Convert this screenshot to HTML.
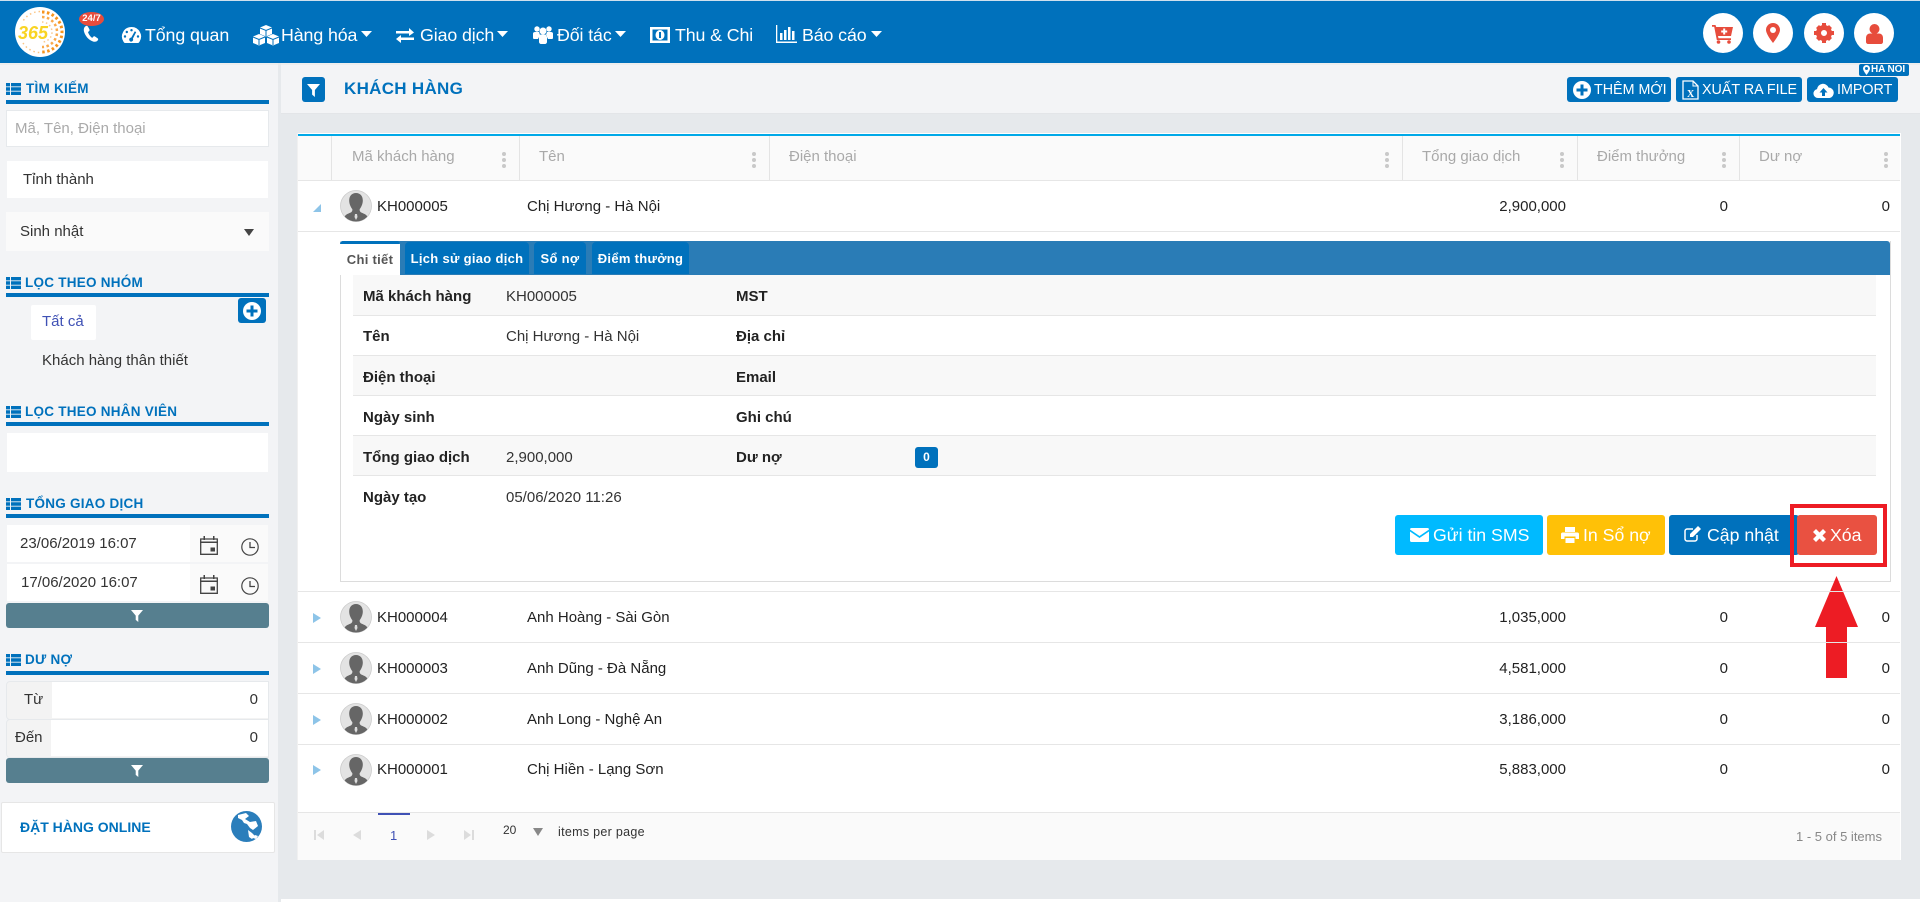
<!DOCTYPE html>
<html lang="vi"><head><meta charset="utf-8"><title>Khách hàng</title>
<style>
html,body{margin:0;padding:0;width:1920px;height:902px;overflow:hidden;background:#e6e9ec;font-family:"Liberation Sans",sans-serif;font-size:15px;color:#333}
.a{position:absolute}
.t{position:absolute;white-space:nowrap;line-height:22px;font-size:15px}
.n{position:absolute;white-space:nowrap;line-height:24px;font-size:17.8px;color:#fff;top:23px;letter-spacing:-.1px}
.h{position:absolute;white-space:nowrap;line-height:20px;font-size:13.5px;font-weight:bold;color:#0071bc;left:26px;letter-spacing:.25px}
.bar{position:absolute;left:6px;width:263px;height:4px;background:#0071bc}
.li{position:absolute;left:6px;width:15px;height:12px}
.c{position:absolute;white-space:nowrap;line-height:22px;color:#a9a9a9;font-size:15px;top:146px}
.sep{position:absolute;top:136px;height:44px;width:1px;background:#e4e4e4}
.bd{position:absolute;height:1px;background:#e6e6e6}
.d{position:absolute;width:4px;height:16px;top:152px}
.r{position:absolute;text-align:right;white-space:nowrap;line-height:22px;font-size:15px;color:#222}
.l{position:absolute;white-space:nowrap;line-height:22px;font-weight:bold;font-size:15px;color:#222;left:363px}
.l2{left:736px}
.v{position:absolute;white-space:nowrap;line-height:22px;font-size:15px;left:506px;color:#333}
.tab{position:absolute;top:242px;height:32px;line-height:33px;background:#0071bc;color:#fff;font-weight:bold;font-size:13px;text-align:center;border-radius:4px 4px 0 0;letter-spacing:.3px}
.btn{position:absolute;top:515px;height:40px;line-height:40px;border-radius:3px;color:#fff;font-size:17.7px;white-space:nowrap}
.tb{position:absolute;top:77px;height:25px;line-height:27px;background:#0071bc;color:#fff;border-radius:3px;font-size:14.3px;white-space:nowrap}
.fb{position:absolute;left:6px;width:263px;height:25px;background:#567f8f;border-radius:3px}
.w{position:absolute;background:#fff}
svg{position:absolute;overflow:visible}
</style></head><body>
<svg width="0" height="0" style="position:absolute"><defs>
<symbol id="list" viewBox="0 0 15 12"><path fill="#0071bc" d="M0 0h4v3.400H0zM5 0h10v3.400H5zM0 4.300h4v3.400H0zM5 4.300h10v3.400H5zM0 8.600h4V12H0zM5 8.600h10V12H5z"/></symbol>
<symbol id="fil" viewBox="0 0 14 14"><path fill="#fff" d="M0 0h14L8.500 6.500V14L5.500 11.500V6.500z"/></symbol>
<symbol id="ava" viewBox="0 0 32 32"><defs><clipPath id="cc"><circle cx="16" cy="16" r="15.500"/></clipPath></defs><circle cx="16" cy="16" r="15.500" fill="#e3e3e3" stroke="#ccc" stroke-width=".8"/><g clip-path="url(#cc)" fill="#666"><path d="M16 3c4.500 0 7 3.500 6.800 8-.1 3-1.500 6-3 8-.5 1 0 2.500 1 3.200 2.500 1.300 5.500 2 6.500 4.300V32H4.700v-5.500c1-2.300 4-3 6.500-4.300 1-.7 1.500-2.200 1-3.200-1.500-2-2.900-5-3-8C9 6.500 11.500 3 16 3z"/><path fill="#ddd" d="M15 24h2l.5 3-1.500 3-1.500-3z"/></g></symbol>
<symbol id="cal" viewBox="0 0 18 19"><path fill="none" stroke="#444" stroke-width="1.300" d="M.7 3h16.600v15.300H.7z"/><path fill="#444" d="M0 5.500h18V7H0zM3.500 0h1.500v4H3.500zM13 0h1.500v4H13zM10.500 11.500h4.500v4h-4.500z"/></symbol>
<symbol id="clk" viewBox="0 0 18 18"><circle cx="9" cy="9" r="8.200" fill="none" stroke="#444" stroke-width="1.200"/><path fill="none" stroke="#444" stroke-width="1.300" d="M9 4v5.500h5"/></symbol>
<symbol id="plus" viewBox="0 0 18 18"><circle cx="9" cy="9" r="9" fill="#fff"/><path fill="#0071bc" d="M7.500 3.500h3v4h4v3h-4v4h-3v-4h-4v-3h4z"/></symbol>
<symbol id="tri" viewBox="0 0 8 10"><path fill="#8dc4e8" d="M0 0l8 5-8 5z"/></symbol>
<symbol id="car" viewBox="0 0 11 6"><path fill="#fff" d="M0 0h11L5.500 6z"/></symbol>
</defs></svg>

<!-- header -->
<div class="a" style="left:0;top:0;width:1920px;height:1px;background:#cfe0ee"></div>
<div class="a" style="left:0;top:1px;width:1920px;height:62px;background:#0071bc"></div>
<svg style="left:15px;top:7px" width="50" height="50" viewBox="0 0 50 50"><circle cx="25" cy="25" r="25" fill="#fff"/><g fill="none" stroke="#f7941d"><path d="M27 5A20 20 0 0 1 27 45" stroke-width="3" stroke-dasharray="2.500 2.500"/><path d="M27 10A15 15 0 0 1 27 40" stroke-width="2.500" stroke-dasharray="2.500 2.500" stroke-opacity=".8"/><path d="M27 15A10 10 0 0 1 27 35" stroke-width="1.500" stroke-dasharray="1.500 2.500" stroke-opacity=".5"/><path d="M25 4.500A20.500 20.500 0 0 0 8 14M8 36A20.500 20.500 0 0 0 25 45.500" stroke-width="1.500" stroke-dasharray="1.500 3" stroke-opacity=".55"/></g><text x="3" y="32" font-family="Liberation Sans" font-weight="bold" font-style="italic" font-size="18" fill="#f9d423">365</text></svg>
<svg style="left:83px;top:26px" width="16" height="16" viewBox="0 0 16 16"><path fill="#fff" d="M3 0C1 1 .5 3 1 5.500c1 4 4.500 8.500 9 10 2 .6 4 .2 5-1.500.5-.8 0-1.500-.8-2L12 10.500c-.8-.5-1.500-.2-2 .5l-.7.9C7.500 11 5.500 8 5 6l1-.8c.6-.5.700-1.200.4-2L5 .7C4.600 0 3.800-.3 3 0z"/></svg>
<div class="a" style="left:79px;top:12px;width:25px;height:14px;border-radius:50%;background:#e74c3c;color:#fff;font-size:9.500px;font-weight:bold;text-align:center;line-height:14px">24/7</div>

<svg style="left:122px;top:27px" width="19" height="17" viewBox="0 0 19 17"><path fill="#fff" d="M9.500 0a9.500 9.500 0 0 1 8 14.700c-.5.800-1 1.300-2 1.300h-12c-1 0-1.500-.5-2-1.300A9.500 9.500 0 0 1 9.500 0z"/><g fill="#0071bc"><circle cx="9.500" cy="3.200" r="1.200"/><circle cx="4.800" cy="5" r="1.200"/><circle cx="3" cy="9.500" r="1.200"/><circle cx="16" cy="9.500" r="1.200"/><path d="M12.800 4.300l1.400.8-3.300 6.500a2 2 0 1 1-1.700-1z"/></g></svg>
<div class="n" style="left:145px">Tổng quan</div>
<svg style="left:252px;top:25px" width="28" height="20" viewBox="0 0 28 20"><g fill="#fff"><path d="M14 0l6 2.500v6.500l-6 2.500-6-2.500V2.500z"/><path d="M7 9l6 2.500V18l-6 2.500L1 18v-6.500z"/><path d="M21 9l6 2.500V18l-6 2.500L15 18v-6.500z"/></g><path stroke="#0071bc" stroke-width="1" fill="none" d="M8 3l6 2.500L20 3M14 5.500V11M1 12l6 2.500L13 12M7 14.500V20M15 12l6 2.500L27 12M21 14.500V20"/></svg>
<div class="n" style="left:281px">Hàng hóa</div>
<svg style="left:361px;top:31px" width="11" height="6"><use href="#car"/></svg>
<svg style="left:396px;top:28px" width="18" height="15" viewBox="0 0 18 15"><path fill="#fff" d="M0 3h13V0l5 4.500L13 8V5.500H0zM18 9.500H5V7L0 11l5 4v-3h13z"/></svg>
<div class="n" style="left:420px">Giao dịch</div>
<svg style="left:497px;top:31px" width="11" height="6"><use href="#car"/></svg>
<svg style="left:533px;top:25px" width="20" height="19" viewBox="0 0 20 19"><g fill="#fff"><circle cx="4" cy="4" r="2.700"/><circle cx="16" cy="4" r="2.700"/><circle cx="10" cy="6" r="3.500"/><path d="M0 8.500c0-1 1-1.500 2-1.500h4l1 3-2 4H1c-1 0-1-1-1-2zM20 8.500c0-1-1-1.500-2-1.500h-4l-1 3 2 4h4c1 0 1-1 1-2zM6 12c0-1.500 1-2.500 2-2.500h4c1 0 2 1 2 2.500v5c0 1-1 2-2 2H8c-1 0-2-1-2-2z"/></g></svg>
<div class="n" style="left:557px">Đối tác</div>
<svg style="left:615px;top:31px" width="11" height="6"><use href="#car"/></svg>
<svg style="left:650px;top:27px" width="20" height="16" viewBox="0 0 20 16"><path fill="#fff" d="M0 0h20v16H0z"/><path fill="#0071bc" d="M2.500 2.500h15v11h-15z"/><ellipse cx="10" cy="8" rx="4.500" ry="5" fill="#fff"/><path fill="#0071bc" d="M9 5h2v6H9z"/></svg>
<div class="n" style="left:675px">Thu &amp; Chi</div>
<svg style="left:776px;top:25px" width="21" height="18" viewBox="0 0 21 18"><path fill="#fff" d="M0 0h1.300v16.500H21V18H0zM4 8h2.500v7H4zM8 5h2.500v10H8zM12 2h2.500v13H12zM16 6h2.500v9H16z"/></svg>
<div class="n" style="left:802px">Báo cáo</div>
<svg style="left:871px;top:31px" width="11" height="6"><use href="#car"/></svg>

<div class="a" style="left:1703px;top:13px;width:40px;height:40px;border-radius:50%;background:#fff"></div>
<svg style="left:1712px;top:25px" width="21" height="19" viewBox="0 0 21 19"><path fill="#e74c3c" d="M0 0h3.500l.7 2H21l-2 9H6l.5 2.200H19v1.800H4.800L2.200 1.800H0z"/><circle cx="6.500" cy="17" r="1.800" fill="#e74c3c"/><circle cx="17" cy="17" r="1.800" fill="#e74c3c"/><path fill="#fff" d="M11.200 3.500h2v2h2v2h-2v2h-2v-2h-2v-2h2z"/></svg>
<div class="a" style="left:1753px;top:13px;width:40px;height:40px;border-radius:50%;background:#fff"></div>
<svg style="left:1766px;top:23px" width="14" height="20" viewBox="0 0 14 20"><path fill="#e74c3c" d="M7 0a7 7 0 0 1 7 7c0 3-3.500 8.500-7 13C3.500 15.500 0 10 0 7a7 7 0 0 1 7-7z"/><circle cx="7" cy="7" r="3" fill="#fff"/></svg>
<div class="a" style="left:1804px;top:13px;width:40px;height:40px;border-radius:50%;background:#fff"></div>
<svg style="left:1814px;top:23px" width="20" height="20" viewBox="0 0 20 20"><circle cx="10" cy="10" r="5.500" fill="none" stroke="#e74c3c" stroke-width="5"/><g fill="#e74c3c"><path d="M8 0h4v4H8zM8 16h4v4H8zM0 8h4v4H0zM16 8h4v4h-4zM2 5l3-3 2.500 2.500-3 3zM15 2l3 3-2.500 2.500-3-3zM18 15l-3 3-2.500-2.500 3-3zM5 18l-3-3 2.500-2.500 3 3z"/></g></svg>
<div class="a" style="left:1854px;top:13px;width:40px;height:40px;border-radius:50%;background:#fff"></div>
<svg style="left:1866px;top:24px" width="17" height="20" viewBox="0 0 17 20"><circle cx="8.500" cy="5" r="5" fill="#e74c3c"/><path fill="#e74c3c" d="M0 14c0-3 2-4.500 4-4.500h9c2 0 4 1.500 4 4.500v4c0 1-1 2-2 2H2c-1 0-2-1-2-2z"/></svg>

<!-- sidebar background -->
<div class="a" style="left:0;top:63px;width:278px;height:839px;background:#f3f4f6"></div>
<div class="a" style="left:281px;top:63px;width:1639px;height:50px;background:#f3f4f6;border-bottom:1px solid #e3e5e8"></div>
<div class="a" style="left:0;top:63px;width:1920px;height:2px;background:#eaeaea;opacity:.6"></div>
<div class="a" style="left:281px;top:899px;width:1639px;height:3px;background:#fff"></div>

<!-- sidebar -->
<svg class="li" style="top:83px"><use href="#list"/></svg><div class="h" style="top:79px">TÌM KIẾM</div><div class="bar" style="top:100px"></div>
<div class="w" style="left:6px;top:110px;width:261px;height:35px;border:1px solid #e6e9ec"></div>
<div class="t" style="left:15px;top:118px;color:#aaa">Mã, Tên, Điện thoại</div>
<div class="w" style="left:7px;top:161px;width:261px;height:37px"></div>
<div class="t" style="left:23px;top:169px">Tỉnh thành</div>
<div class="a" style="left:6px;top:212px;width:263px;height:39px;background:#fafafa"></div>
<div class="t" style="left:20px;top:221px">Sinh nhật</div>
<svg style="left:244px;top:229px" width="10" height="7" viewBox="0 0 10 7"><path fill="#444" d="M0 0h10L5 7z"/></svg>

<svg class="li" style="top:277px"><use href="#list"/></svg><div class="h" style="top:273px;left:25px">LỌC THEO NHÓM</div><div class="bar" style="top:293px"></div>
<div class="a" style="left:238px;top:298px;width:28px;height:25px;background:#0071bc;border-radius:3px"></div>
<svg style="left:243px;top:302px" width="18" height="18"><use href="#plus"/></svg>
<div class="w" style="left:31px;top:305px;width:65px;height:35px;border-radius:2px"></div>
<div class="t" style="left:42px;top:311px;color:#3f51b5">Tất cả</div>
<div class="t" style="left:42px;top:350px">Khách hàng thân thiết</div>

<svg class="li" style="top:406px"><use href="#list"/></svg><div class="h" style="top:402px;left:25px">LỌC THEO NHÂN VIÊN</div><div class="bar" style="top:422px"></div>
<div class="w" style="left:7px;top:433px;width:261px;height:39px"></div>

<svg class="li" style="top:498px"><use href="#list"/></svg><div class="h" style="top:494px">TỔNG GIAO DỊCH</div><div class="bar" style="top:514px"></div>
<div class="a" style="left:7px;top:525px;width:261px;height:37px;background:#fafafa"></div>
<div class="w" style="left:7px;top:525px;width:183px;height:37px"></div>
<div class="t" style="left:20px;top:533px">23/06/2019 16:07</div>
<svg style="left:200px;top:536px" width="18" height="19"><use href="#cal"/></svg>
<svg style="left:241px;top:538px" width="18" height="18"><use href="#clk"/></svg>
<div class="a" style="left:7px;top:564px;width:261px;height:37px;background:#fafafa"></div>
<div class="w" style="left:7px;top:564px;width:183px;height:37px"></div>
<div class="t" style="left:21px;top:572px">17/06/2020 16:07</div>
<svg style="left:200px;top:575px" width="18" height="19"><use href="#cal"/></svg>
<svg style="left:241px;top:577px" width="18" height="18"><use href="#clk"/></svg>
<div class="fb" style="top:603px"></div><svg style="left:131px;top:610px" width="12" height="12"><use href="#fil"/></svg>

<svg class="li" style="top:654px"><use href="#list"/></svg><div class="h" style="top:650px;left:25px">DƯ NỢ</div><div class="bar" style="top:671px"></div>
<div class="a" style="left:6px;top:681px;width:261px;height:37px;background:#f3f3f3;border:1px solid #e6e9ec;border-radius:4px 0 0 4px"></div>
<div class="w" style="left:52px;top:682px;width:216px;height:36px"></div>
<div class="t" style="left:24px;top:689px">Từ</div><div class="r" style="left:200px;width:58px;top:689px;color:#333">0</div>
<div class="a" style="left:6px;top:719px;width:261px;height:37px;background:#f3f3f3;border:1px solid #e6e9ec;border-radius:4px 0 0 4px"></div>
<div class="w" style="left:51px;top:720px;width:217px;height:36px"></div>
<div class="t" style="left:15px;top:727px">Đến</div><div class="r" style="left:200px;width:58px;top:727px;color:#333">0</div>
<div class="fb" style="top:758px"></div><svg style="left:131px;top:765px" width="12" height="12"><use href="#fil"/></svg>

<div class="w" style="left:1px;top:802px;width:272px;height:49px;border:1px solid #e6e6e6;border-radius:2px"></div>
<div class="t" style="left:20px;top:816px;font-size:14px;font-weight:bold;color:#0071bc">ĐẶT HÀNG ONLINE</div>
<svg style="left:231px;top:811px" width="31" height="31" viewBox="0 0 31 31"><circle cx="15.500" cy="15.500" r="15.500" fill="#2b7ebb"/><path fill="#fff" d="M7 4l8-2 3 3-4 3 5 3 6-1 2 5-5 4-3-2-3-4-3-1-2-3-4-2zM17 19l4 3 3 3-3 3-3-2zM24 24l3 1-2 3-3-1z"/></svg>

<!-- subheader -->
<div class="a" style="left:302px;top:77px;width:23px;height:25px;background:#0071bc;border-radius:3px"></div>
<svg style="left:307px;top:84px" width="13" height="13"><use href="#fil"/></svg>
<div class="t" style="left:344px;top:78px;font-size:17px;font-weight:bold;color:#0071bc;letter-spacing:.3px">KHÁCH HÀNG</div>

<div class="tb" style="left:1567px;width:104px"><span class="a" style="left:27px">THÊM MỚI</span></div>
<svg style="left:1573px;top:81px" width="18" height="18"><use href="#plus"/></svg>
<div class="tb" style="left:1676px;width:126px"><span class="a" style="left:26px">XUẤT RA FILE</span></div>
<svg style="left:1682px;top:80px" width="17" height="20" viewBox="0 0 17 20"><path fill="none" stroke="#fff" stroke-width="1.300" d="M1 1h10l5 5v13H1z"/><path fill="none" stroke="#fff" d="M11 1v5h5"/><text x="5" y="17" font-size="10" font-weight="bold" fill="#fff" font-family="Liberation Serif">X</text></svg>
<div class="tb" style="left:1807px;width:91px"><span class="a" style="left:30px">IMPORT</span></div>
<svg style="left:1813px;top:83px" width="21" height="15" viewBox="0 0 21 15"><path fill="#fff" d="M5 15a4.500 4.500 0 0 1-1-8.900A6 6 0 0 1 15.500 4.500 5.300 5.300 0 0 1 16.500 15z"/><path fill="#0071bc" d="M10.500 5l4 4.500H12V13H9V9.500H6.500z"/></svg>
<div class="a" style="left:1859px;top:64px;width:50px;height:12px;background:#0071bc;border-radius:2px;color:#fff;font-size:10px;font-weight:bold;line-height:12px;white-space:nowrap"><span class="a" style="left:12px;letter-spacing:-.1px">HA NOI</span></div>
<svg style="left:1863px;top:65px" width="7" height="10" viewBox="0 0 14 20"><path fill="#fff" d="M7 0a7 7 0 0 1 7 7c0 3-3.500 8.500-7 13C3.500 15.500 0 10 0 7a7 7 0 0 1 7-7z"/><circle cx="7" cy="7" r="3" fill="#0071bc"/></svg>

<!-- card -->
<div class="w" style="left:297px;top:133px;width:1603px;height:727px;border-left:1px solid #f0f0f0"></div>
<div class="a" style="left:298px;top:134px;width:1602px;height:2px;background:#00a9e8"></div>
<div class="a" style="left:298px;top:136px;width:1602px;height:44px;background:#fafafa"></div>
<div class="bd" style="left:298px;top:180px;width:1602px"></div>
<div class="sep" style="left:331px"></div><div class="sep" style="left:519px"></div><div class="sep" style="left:769px"></div><div class="sep" style="left:1402px"></div><div class="sep" style="left:1577px"></div><div class="sep" style="left:1739px"></div>
<div class="c" style="left:352px">Mã khách hàng</div>
<div class="c" style="left:539px">Tên</div>
<div class="c" style="left:789px">Điện thoại</div>
<div class="c" style="left:1422px">Tổng giao dịch</div>
<div class="c" style="left:1597px">Điểm thưởng</div>
<div class="c" style="left:1759px">Dư nợ</div>
<svg class="d" style="left:502px" viewBox="0 0 4 16"><g fill="#c9c9c9"><circle cx="2" cy="2" r="2"/><circle cx="2" cy="8" r="2"/><circle cx="2" cy="14" r="2"/></g></svg>
<svg class="d" style="left:752px" viewBox="0 0 4 16"><g fill="#c9c9c9"><circle cx="2" cy="2" r="2"/><circle cx="2" cy="8" r="2"/><circle cx="2" cy="14" r="2"/></g></svg>
<svg class="d" style="left:1385px" viewBox="0 0 4 16"><g fill="#c9c9c9"><circle cx="2" cy="2" r="2"/><circle cx="2" cy="8" r="2"/><circle cx="2" cy="14" r="2"/></g></svg>
<svg class="d" style="left:1560px" viewBox="0 0 4 16"><g fill="#c9c9c9"><circle cx="2" cy="2" r="2"/><circle cx="2" cy="8" r="2"/><circle cx="2" cy="14" r="2"/></g></svg>
<svg class="d" style="left:1722px" viewBox="0 0 4 16"><g fill="#c9c9c9"><circle cx="2" cy="2" r="2"/><circle cx="2" cy="8" r="2"/><circle cx="2" cy="14" r="2"/></g></svg>
<svg class="d" style="left:1884px" viewBox="0 0 4 16"><g fill="#c9c9c9"><circle cx="2" cy="2" r="2"/><circle cx="2" cy="8" r="2"/><circle cx="2" cy="14" r="2"/></g></svg>

<!-- row 1 -->
<svg style="left:313px;top:204px" width="8" height="8" viewBox="0 0 8 8"><path fill="#8dc4e8" d="M8 0v8H0z"/></svg>
<svg style="left:340px;top:190px" width="32" height="32"><use href="#ava"/></svg>
<div class="t" style="left:377px;top:196px;color:#222">KH000005</div>
<div class="t" style="left:527px;top:196px;color:#222">Chị Hương - Hà Nội</div>
<div class="r" style="left:1400px;width:166px;top:196px">2,900,000</div>
<div class="r" style="left:1650px;width:78px;top:196px">0</div>
<div class="r" style="left:1812px;width:78px;top:196px">0</div>
<div class="bd" style="left:298px;top:231px;width:1602px"></div>

<!-- detail -->
<div class="a" style="left:340px;top:241px;width:1549px;height:340px;border:1px solid #dcdcdc;border-top:0;box-sizing:content-box"></div>
<div class="a" style="left:340px;top:241px;width:1550px;height:34px;background:#2a7cb6;border-radius:3px 3px 0 0"></div>
<div class="a" style="left:340px;top:243px;width:60px;height:32px;background:#fff"></div>
<div class="a" style="left:340px;top:241px;width:60px;height:3px;background:#0071bc;border-radius:3px 3px 0 0"></div>
<div class="a" style="left:340px;top:243px;width:60px;height:32px;line-height:34px;text-align:center;color:#555;font-size:13px;font-weight:bold;letter-spacing:.3px">Chi tiết</div>
<div class="tab" style="left:405px;width:124px">Lịch sử giao dịch</div>
<div class="tab" style="left:534px;width:52px">Sổ nợ</div>
<div class="tab" style="left:592px;width:97px">Điểm thưởng</div>

<div class="a" style="left:353px;top:275px;width:1523px;height:40px;background:#f8f8f8"></div>
<div class="a" style="left:353px;top:356px;width:1523px;height:39px;background:#f8f8f8"></div>
<div class="a" style="left:353px;top:436px;width:1523px;height:39px;background:#f8f8f8"></div>
<div class="bd" style="left:353px;top:315px;width:1523px"></div>
<div class="bd" style="left:353px;top:355px;width:1523px"></div>
<div class="bd" style="left:353px;top:395px;width:1523px"></div>
<div class="bd" style="left:353px;top:435px;width:1523px"></div>
<div class="bd" style="left:353px;top:475px;width:1523px"></div>

<div class="l" style="top:286px">Mã khách hàng</div><div class="v" style="top:286px">KH000005</div><div class="l l2" style="top:286px">MST</div>
<div class="l" style="top:326px">Tên</div><div class="v" style="top:326px">Chị Hương - Hà Nội</div><div class="l l2" style="top:326px">Địa chỉ</div>
<div class="l" style="top:367px">Điện thoại</div><div class="l l2" style="top:367px">Email</div>
<div class="l" style="top:407px">Ngày sinh</div><div class="l l2" style="top:407px">Ghi chú</div>
<div class="l" style="top:447px">Tổng giao dịch</div><div class="v" style="top:447px">2,900,000</div><div class="l l2" style="top:447px">Dư nợ</div>
<div class="a" style="left:915px;top:447px;width:23px;height:21px;background:#0071bc;border-radius:3px;color:#fff;font-weight:bold;font-size:12px;text-align:center;line-height:21px">0</div>
<div class="l" style="top:487px">Ngày tạo</div><div class="v" style="top:487px">05/06/2020 11:26</div>

<div class="btn" style="left:1395px;width:148px;background:#00baff"><span class="a" style="left:38px">Gửi tin SMS</span></div>
<svg style="left:1410px;top:528px" width="19" height="14" viewBox="0 0 19 14"><path fill="#fff" d="M0 1.500C0 .5.700 0 1.500 0h16c.8 0 1.500.5 1.500 1.500L9.500 8zM0 3.500l9.500 6.500L19 3.500V12.500c0 1-.7 1.500-1.500 1.500h-16C.7 14 0 13.500 0 12.500z"/></svg>
<div class="btn" style="left:1547px;width:118px;background:#ffc107"><span class="a" style="left:36px">In Sổ nợ</span></div>
<svg style="left:1561px;top:527px" width="18" height="16" viewBox="0 0 18 16"><path fill="#fff" d="M4 0h10v5H4zM1.500 5.500h15c.8 0 1.500.7 1.500 1.500v5h-3.500V9.500h-11V12H0V7c0-.8.700-1.500 1.500-1.500zM4.500 11h9v5h-9z"/></svg>
<div class="btn" style="left:1669px;width:130px;background:#0071bc"><span class="a" style="left:38px">Cập nhật</span></div>
<svg style="left:1684px;top:526px" width="17" height="16" viewBox="0 0 17 16"><path fill="none" stroke="#fff" stroke-width="1.500" d="M13 9v4c0 1-1 2-2 2H3c-1 0-2-1-2-2V5c0-1 1-2 2-2h6"/><path fill="#fff" d="M14 0l3 3-8 8H6V8z"/></svg>

<div class="a" style="left:1790px;top:504px;width:89px;height:55px;border:4px solid #ed1c24;background:transparent"></div>
<div class="btn" style="left:1797px;width:80px;background:#e95141"><span class="a" style="left:33px">Xóa</span></div>
<svg style="left:1813px;top:528px" width="13" height="14" viewBox="0 0 13 14"><path fill="#fff" d="M3 1l3.500 3.500L10 1l3 3-3.500 3.500L13 11l-3 3-3.500-3.500L3 14l-3-3 3.500-3.500L0 4z"/></svg>
<svg style="left:1815px;top:576px" width="43" height="102" viewBox="0 0 43 102"><path fill="#ed1c24" d="M21.500 0L43 51H32V102H11V51H0z"/></svg>

<!-- rows -->
<div class="bd" style="left:298px;top:591px;width:1602px"></div>
<div class="bd" style="left:298px;top:642px;width:1602px"></div>
<div class="bd" style="left:298px;top:693px;width:1602px"></div>
<div class="bd" style="left:298px;top:744px;width:1602px"></div>

<svg style="left:313px;top:613px" width="8" height="10"><use href="#tri"/></svg>
<svg style="left:340px;top:601px" width="32" height="32"><use href="#ava"/></svg>
<div class="t" style="left:377px;top:607px;color:#222">KH000004</div><div class="t" style="left:527px;top:607px;color:#222">Anh Hoàng - Sài Gòn</div>
<div class="r" style="left:1400px;width:166px;top:607px">1,035,000</div><div class="r" style="left:1650px;width:78px;top:607px">0</div><div class="r" style="left:1812px;width:78px;top:607px">0</div>

<svg style="left:313px;top:664px" width="8" height="10"><use href="#tri"/></svg>
<svg style="left:340px;top:652px" width="32" height="32"><use href="#ava"/></svg>
<div class="t" style="left:377px;top:658px;color:#222">KH000003</div><div class="t" style="left:527px;top:658px;color:#222">Anh Dũng - Đà Nẵng</div>
<div class="r" style="left:1400px;width:166px;top:658px">4,581,000</div><div class="r" style="left:1650px;width:78px;top:658px">0</div><div class="r" style="left:1812px;width:78px;top:658px">0</div>

<svg style="left:313px;top:715px" width="8" height="10"><use href="#tri"/></svg>
<svg style="left:340px;top:703px" width="32" height="32"><use href="#ava"/></svg>
<div class="t" style="left:377px;top:709px;color:#222">KH000002</div><div class="t" style="left:527px;top:709px;color:#222">Anh Long - Nghệ An</div>
<div class="r" style="left:1400px;width:166px;top:709px">3,186,000</div><div class="r" style="left:1650px;width:78px;top:709px">0</div><div class="r" style="left:1812px;width:78px;top:709px">0</div>

<svg style="left:313px;top:765px" width="8" height="10"><use href="#tri"/></svg>
<svg style="left:340px;top:754px" width="32" height="32"><use href="#ava"/></svg>
<div class="t" style="left:377px;top:759px;color:#222">KH000001</div><div class="t" style="left:527px;top:759px;color:#222">Chị Hiền - Lạng Sơn</div>
<div class="r" style="left:1400px;width:166px;top:759px">5,883,000</div><div class="r" style="left:1650px;width:78px;top:759px">0</div><div class="r" style="left:1812px;width:78px;top:759px">0</div>

<!-- footer -->
<div class="a" style="left:298px;top:812px;width:1602px;height:48px;background:#fafafa;border-top:1px solid #e6e6e6;box-sizing:border-box"></div>
<div class="a" style="left:378px;top:813px;width:32px;height:2px;background:#3f51b5"></div>
<svg style="left:314px;top:830px" width="10" height="10" viewBox="0 0 10 10"><path fill="#dcdcdc" d="M0 0h2v10H0zM10 0v10L3 5z"/></svg>
<svg style="left:353px;top:830px" width="8" height="10" viewBox="0 0 8 10"><path fill="#dcdcdc" d="M8 0v10L0 5z"/></svg>
<div class="t" style="left:390px;top:825px;font-size:13px;color:#3f51b5">1</div>
<svg style="left:427px;top:830px" width="8" height="10" viewBox="0 0 8 10"><path fill="#dcdcdc" d="M0 0v10l8-5z"/></svg>
<svg style="left:464px;top:830px" width="10" height="10" viewBox="0 0 10 10"><path fill="#dcdcdc" d="M0 0v10l7-5zM8 0h2v10H8z"/></svg>
<div class="t" style="left:503px;top:819px;font-size:12px">20</div>
<svg style="left:533px;top:828px" width="10" height="8" viewBox="0 0 10 8"><path fill="#888" d="M0 0h10L5 8z"/></svg>
<div class="t" style="left:558px;top:821px;font-size:12.500px;letter-spacing:.3px">items per page</div>
<div class="r" style="left:1700px;width:182px;top:826px;font-size:13px;color:#888">1 - 5 of 5 items</div>
</body></html>
